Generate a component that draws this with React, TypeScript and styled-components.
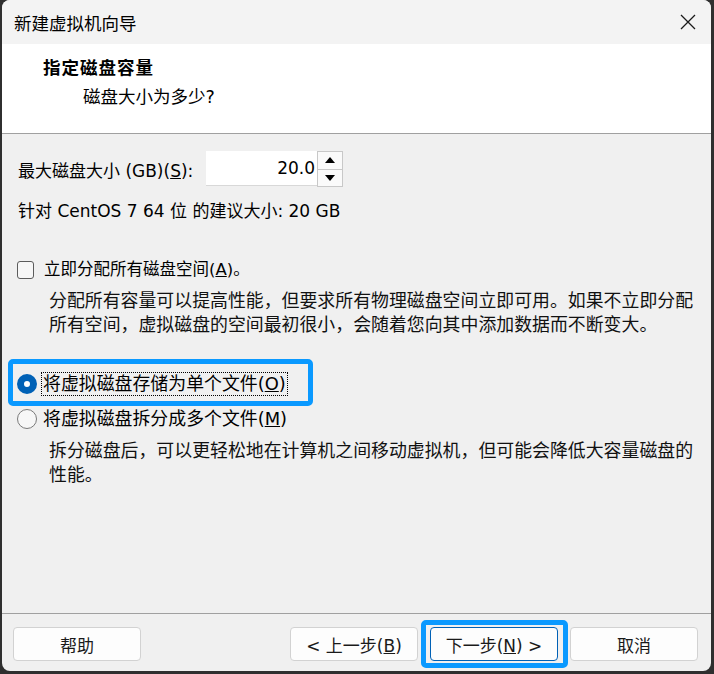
import React from "react";
import styled, { createGlobalStyle } from "styled-components";

const GlobalStyle = createGlobalStyle`
  html, body {
    margin: 0;
    padding: 0;
    background: #2f2f2f;
  }
  body {
    font-family: "DejaVu Sans", "Noto Sans CJK SC", sans-serif;
    color: #000;
  }
`;

const Window = styled.div`
  display: flex;
  flex-flow: column nowrap;
  width: 709px;
  height: 671px;
  margin: 0 3px 3px 2px;
  border-radius: 8px;
  overflow: hidden;
  background: #f0f0f0;
`;

const TitleBar = styled.div`
  display: flex;
  align-items: center;
  justify-content: space-between;
  height: 44px;
  padding: 0 15px 0 12px;
  background: #f3f3f3;
  font-size: 17.5px;
  flex-shrink: 0;
`;

const CloseIcon = styled.svg`
  width: 16px;
  height: 16px;
  display: block;
`;

const Header = styled.div`
  height: 90px;
  padding: 12px 0 0 41px;
  box-sizing: border-box;
  background: #fff;
  border-bottom: 1px solid #a0a0a0;
  flex-shrink: 0;
`;

const HeaderTitle = styled.div`
  font-size: 17.5px;
  font-weight: 700;
  line-height: 24px;
  letter-spacing: 1px;
`;

const HeaderSub = styled.div`
  font-size: 17.5px;
  line-height: 24px;
  margin: 5px 0 0 40px;
`;

const Body = styled.div`
  flex: 1;
  padding: 17px 16px 0 15px;
  font-size: 17px;
`;

const SizeRow = styled.div`
  display: flex;
  align-items: center;
  height: 36px;
  padding-left: 1px;
`;

const SizeLabel = styled.span`
  width: 188px;
`;

const Spinner = styled.div`
  display: flex;
  height: 36px;
`;

const SpinField = styled.div`
  width: 111px;
  height: 35px;
  background: #fff;
  border-bottom: 1px solid #d8d8d8;
  display: flex;
  align-items: center;
  justify-content: flex-end;
  padding-right: 2px;
  box-sizing: border-box;
  font-size: 17px;
`;

const SpinButtons = styled.div`
  display: flex;
  flex-flow: column nowrap;
  width: 26px;
`;

const SpinButton = styled.div`
  flex: 1;
  display: flex;
  align-items: center;
  justify-content: center;
  background: #fafafa;
  border: 1px solid #c8c8c8;
  & + & {
    border-top: none;
  }
`;

const Recommend = styled.div`
  margin-top: 12px;
  line-height: 24px;
  padding-left: 1px;
`;

const CheckRow = styled.label`
  display: flex;
  align-items: center;
  gap: 10px;
  margin-top: 35px;
  line-height: 24px;
  font-size: 16.5px;
`;

const CheckBox = styled.span`
  width: 15px;
  height: 16px;
  border: 1px solid #5c5c5c;
  border-radius: 3px;
  background: #f7f7f7;
  flex-shrink: 0;
`;

const Description = styled.p<{ $gap: number }>`
  margin: ${(p) => p.$gap}px 0 0 32px;
  font-size: 17.9px;
  line-height: 24px;
  color: #111;
`;

const RadioGroup = styled.div`
  display: flex;
  flex-flow: column nowrap;
  align-items: flex-start;
  gap: 11px;
  margin-top: 35px;
`;

const RadioRow = styled.label`
  position: relative;
  display: flex;
  align-items: center;
  gap: 5px;
  height: 24px;
  font-size: 17.9px;
`;

const RadioDot = styled.span<{ $checked?: boolean }>`
  width: 20px;
  height: 20px;
  border-radius: 50%;
  box-sizing: border-box;
  flex-shrink: 0;
  background: ${(p) => (p.$checked ? "#fff" : "#f7f7f7")};
  border: ${(p) => (p.$checked ? "7px solid #0061b6" : "1px solid #7a7a7a")};
`;

const RadioText = styled.span<{ $focused?: boolean }>`
  padding: 0 1px;
  line-height: 22px;
  outline: ${(p) => (p.$focused ? "1px dotted #000" : "none")};
`;

const Highlight = styled.span`
  position: absolute;
  border: 5px solid #0a99ff;
  border-radius: 5px;
  pointer-events: none;
`;

const RowHighlight = styled(Highlight)`
  top: -13px;
  bottom: -10px;
  left: -9px;
  right: -26px;
`;

const FooterBar = styled.div`
  display: flex;
  align-items: flex-start;
  height: 58px;
  padding: 13px 13px 0 11px;
  box-sizing: border-box;
  border-top: 1px solid #a0a0a0;
  flex-shrink: 0;
`;

const Spacer = styled.div`
  flex: 1;
`;

const ButtonGroup = styled.div`
  display: flex;
  gap: 12px;
`;

const ButtonWrap = styled.div`
  position: relative;
  display: flex;
`;

const ButtonHighlight = styled(Highlight)`
  top: -7px;
  bottom: -7px;
  left: -9px;
  right: -10px;
`;

const Button = styled.button<{ $default?: boolean }>`
  width: 128px;
  height: 34px;
  border-radius: 4px;
  background: #fdfdfd;
  border: 1px solid ${(p) => (p.$default ? "#0061b6" : "#d2d2d2")};
  font-family: "DejaVu Sans", "Noto Sans CJK SC", sans-serif;
  font-size: 17px;
  color: #1a1a1a;
  padding: 0;
`;

function ArrowUp() {
  return (
    <svg width="10" height="6" viewBox="0 0 10 6">
      <polygon points="5,0 10,6 0,6" fill="#000" />
    </svg>
  );
}

function ArrowDown() {
  return (
    <svg width="10" height="6" viewBox="0 0 10 6">
      <polygon points="0,0 10,0 5,6" fill="#000" />
    </svg>
  );
}

export default function App() {
  return (
    <>
      <GlobalStyle />
      <Window>
        <TitleBar>
          <span>新建虚拟机向导</span>
          <CloseIcon viewBox="0 0 16 16">
            <path d="M1 1 L15 15 M15 1 L1 15" stroke="#1a1a1a" strokeWidth="1.3" fill="none" />
          </CloseIcon>
        </TitleBar>
        <Header>
          <HeaderTitle>指定磁盘容量</HeaderTitle>
          <HeaderSub>磁盘大小为多少?</HeaderSub>
        </Header>
        <Body>
          <SizeRow>
            <SizeLabel>
              最大磁盘大小 (GB)(<u>S</u>):
            </SizeLabel>
            <Spinner>
              <SpinField>20.0</SpinField>
              <SpinButtons>
                <SpinButton>
                  <ArrowUp />
                </SpinButton>
                <SpinButton>
                  <ArrowDown />
                </SpinButton>
              </SpinButtons>
            </Spinner>
          </SizeRow>
          <Recommend>针对 CentOS 7 64 位 的建议大小: 20 GB</Recommend>
          <CheckRow>
            <CheckBox />
            <span>
              立即分配所有磁盘空间(<u>A</u>)。
            </span>
          </CheckRow>
          <Description $gap={7}>
            分配所有容量可以提高性能，但要求所有物理磁盘空间立即可用。如果不立即分配所有空间，虚拟磁盘的空间最初很小，会随着您向其中添加数据而不断变大。
          </Description>
          <RadioGroup>
            <RadioRow>
              <RadioDot $checked />
              <RadioText $focused>
                将虚拟磁盘存储为单个文件(<u>O</u>)
              </RadioText>
              <RowHighlight />
            </RadioRow>
            <RadioRow>
              <RadioDot />
              <RadioText>
                将虚拟磁盘拆分成多个文件(<u>M</u>)
              </RadioText>
            </RadioRow>
          </RadioGroup>
          <Description $gap={8}>
            拆分磁盘后，可以更轻松地在计算机之间移动虚拟机，但可能会降低大容量磁盘的性能。
          </Description>
        </Body>
        <FooterBar>
          <Button>帮助</Button>
          <Spacer />
          <ButtonGroup>
            <Button>
              &lt; 上一步(<u>B</u>)
            </Button>
            <ButtonWrap>
              <Button $default>
                下一步(<u>N</u>) &gt;
              </Button>
              <ButtonHighlight />
            </ButtonWrap>
            <Button>取消</Button>
          </ButtonGroup>
        </FooterBar>
      </Window>
    </>
  );
}
